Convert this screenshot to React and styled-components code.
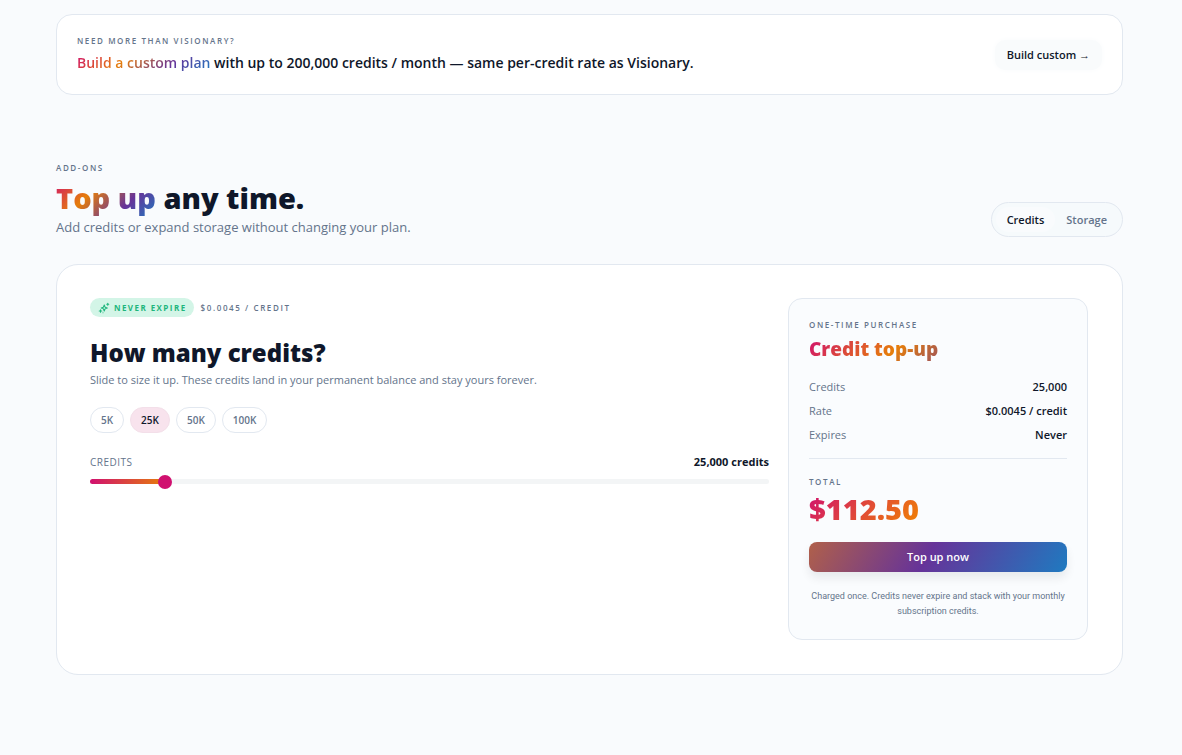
import React, { useState } from 'react'
import styled, { createGlobalStyle, css } from 'styled-components'

const RATE = 0.0045
const MIN = 5000
const MAX = 200000
const PRESETS = [5000, 25000, 50000, 100000]

const brand = 'linear-gradient(135deg, #d0106f 0%, #e67e0a 35%, #663399 70%, #1f7ac0 100%)'
const warm = 'linear-gradient(135deg, #d0106f 0%, #ee7a0a 45%, #e67e0a 100%)'

const GlobalStyle = createGlobalStyle`
  * {
    box-sizing: border-box;
  }

  body {
    margin: 0;
    background: #f9fbfd;
    color: #0f172a;
    font-family: 'Segoe UI', 'Open Sans', 'Noto Sans', sans-serif;
    font-size: 11px;
  }

  h2, h3, p, dl, dd {
    margin: 0;
  }

  button, input {
    font-family: inherit;
  }
`

const Page = styled.main`
  padding: 14px 59px 80px 56px;
`

const Eyebrow = styled.p`
  color: #64748b;
  font-size: 8px;
  font-weight: 600;
  line-height: 12px;
  letter-spacing: 0.2em;
  text-transform: uppercase;
`

const gradientText = css`
  background: ${p => (p.$warm ? warm : brand)};
  background-clip: text;
  -webkit-background-clip: text;
  color: transparent;
`

const GradientSpan = styled.span`
  ${gradientText}
`

const Banner = styled.section`
  display: flex;
  align-items: center;
  justify-content: space-between;
  gap: 20px;
  padding: 20px;
  background: #fff;
  border: 1px solid #e2e8f0;
  border-radius: 16px;
`

const BannerText = styled.p`
  margin-top: 4px;
  font-size: 14px;
  font-weight: 600;
  line-height: 23px;
`

const GhostButton = styled.button`
  flex-shrink: 0;
  padding: 0 12px;
  background: #f9fbfc;
  border: 0;
  border-radius: 10px;
  box-shadow: 0 0 6px #f9fbfc;
  color: #0f172a;
  font-size: 11px;
  font-weight: 600;
  line-height: 30px;
  cursor: pointer;
`

const SectionHead = styled.header`
  display: flex;
  align-items: flex-end;
  justify-content: space-between;
  margin: 67px 0 27px;
`

const Title = styled.h2`
  margin-top: 7px;
  font-size: 29px;
  font-weight: 800;
  line-height: 34px;
`

const Lead = styled.p`
  margin-top: 3px;
  color: #64748b;
  font-size: 13px;
  line-height: 19px;
`

const Tabs = styled.div`
  display: flex;
  padding: 4px;
  background: #f6fafc;
  border: 1px solid #e2e8f0;
  border-radius: 18px;
`

const Tab = styled.button`
  padding: 0 11px;
  background: ${p => (p.$active ? '#f9fbfd' : 'transparent')};
  border: 0;
  border-radius: 13px;
  color: ${p => (p.$active ? '#0f172a' : '#64748b')};
  font-size: 11px;
  font-weight: 600;
  line-height: 25px;
  cursor: pointer;
`

const Card = styled.section`
  display: grid;
  grid-template-columns: 1fr 300px;
  gap: 19px;
  padding: 33px 34px 34px 33px;
  background: #fff;
  border: 1px solid #e2e8f0;
  border-radius: 22px;
`

const BadgeRow = styled.div`
  display: flex;
  align-items: center;
  gap: 7px;
`

const Badge = styled.span`
  display: flex;
  align-items: center;
  gap: 4px;
  padding: 0 7px 0 8px;
  background: #d3f5e7;
  border-radius: 10px;
  color: #1fb67d;
  font-size: 8px;
  font-weight: 700;
  line-height: 19px;
  letter-spacing: 0.18em;
  text-transform: uppercase;
`

const Question = styled.h3`
  margin-top: 20px;
  font-size: 24px;
  font-weight: 800;
  line-height: 32px;
`

const Hint = styled.p`
  margin-top: 2px;
  color: #64748b;
  line-height: 18px;
`

const Presets = styled.div`
  display: flex;
  gap: 6px;
  margin-top: 18px;
`

const Preset = styled.button`
  padding: 0 10px;
  background: ${p => (p.$active ? '#f8e3ed' : '#fff')};
  border: 1px solid ${p => (p.$active ? '#f3dfe9' : '#e2e8f0')};
  border-radius: 13px;
  color: ${p => (p.$active ? '#0f172a' : '#64748b')};
  font-size: 10px;
  font-weight: 600;
  line-height: 24px;
  cursor: pointer;
`

const SliderHead = styled.div`
  display: flex;
  align-items: center;
  justify-content: space-between;
  margin-top: 19px;
  line-height: 20px;
`

const SliderLabel = styled.label`
  color: #64748b;
  font-size: 10px;
  letter-spacing: 0.05em;
  text-transform: uppercase;
`

const SliderValue = styled.output`
  font-weight: 700;
`

const Slider = styled.input`
  display: block;
  width: 100%;
  height: 14px;
  margin: 2px 0 0;
  background: transparent;
  appearance: none;
  cursor: pointer;

  &::-webkit-slider-runnable-track {
    height: 5px;
    background:
      linear-gradient(90deg, #d0106f, #e67e0a) left / var(--fill) 100% no-repeat,
      #f3f5f6;
    border-radius: 3px;
  }

  &::-webkit-slider-thumb {
    width: 14px;
    height: 14px;
    margin-top: -4px;
    background: #d0106f;
    border-radius: 50%;
    appearance: none;
  }
`

const Summary = styled.aside`
  padding: 20px;
  background: #fafcfe;
  border: 1px solid #e2e8f0;
  border-radius: 14px;
`

const SummaryTitle = styled.h3`
  ${gradientText}
  margin-top: 5px;
  font-size: 19px;
  font-weight: 800;
  line-height: 26px;
`

const Lines = styled.dl`
  margin-top: 13px;
  padding-bottom: 11px;
  border-bottom: 1px solid #e2e8f0;
`

const Line = styled.div`
  display: flex;
  justify-content: space-between;
  line-height: 24px;

  > dt {
    color: #64748b;
  }

  > dd {
    font-weight: 600;
  }
`

const TotalLabel = styled(Eyebrow)`
  margin-top: 17px;
`

const Total = styled.p`
  ${gradientText}
  margin-top: 3px;
  font-size: 29px;
  font-weight: 800;
  line-height: 36px;
`

const PayButton = styled.button`
  width: 100%;
  margin-top: 15px;
  padding: 0;
  background: linear-gradient(120deg, #b0604a 0%, #663399 46%, #1f7ac0 100%);
  border: 0;
  border-radius: 8px;
  box-shadow: 0 6px 10px rgba(15, 23, 42, 0.08);
  color: #fff;
  font-size: 11px;
  font-weight: 600;
  line-height: 30px;
  cursor: pointer;
`

const Fine = styled.p`
  margin-top: 17px;
  color: #64748b;
  font-family: 'Segoe UI', Roboto, sans-serif;
  font-size: 9px;
  line-height: 15px;
  text-align: center;
`

const SparkleIcon = () => (
  <svg width="12" height="12" viewBox="0 0 24 24" fill="none" stroke="currentColor" strokeWidth="2.2" strokeLinecap="round" strokeLinejoin="round" aria-hidden="true">
    <path d="M12.500 6l1.700 4.300 4.300 1.700-4.300 1.700-1.700 4.300-1.700-4.300L6.500 12l4.300-1.700z" />
    <path d="M19.500 2.500v4M21.500 4.500h-4M5 15.500v5M7.500 18h-5M10 21.500v.1" />
  </svg>
)

const App = () => {
  const [tab, setTab] = useState('Credits')
  const [credits, setCredits] = useState(25000)

  const amount = credits.toLocaleString('en-US')
  const ratio = (credits - MIN) / (MAX - MIN)
  const fill = `calc(7px + (100% - 14px) * ${ratio})`

  return (
    <>
      <GlobalStyle />
      <Page>
        <Banner>
          <div>
            <Eyebrow>Need more than Visionary?</Eyebrow>
            <BannerText>
              <GradientSpan>Build a custom plan</GradientSpan> with up to 200,000 credits / month — same per-credit rate as Visionary.
            </BannerText>
          </div>
          <GhostButton type="button">Build custom →</GhostButton>
        </Banner>

        <SectionHead>
          <div>
            <Eyebrow>Add-ons</Eyebrow>
            <Title><GradientSpan>Top up</GradientSpan> any time.</Title>
            <Lead>Add credits or expand storage without changing your plan.</Lead>
          </div>
          <Tabs>
            {['Credits', 'Storage'].map(name => (
              <Tab key={name} type="button" $active={tab === name} aria-pressed={tab === name} onClick={() => setTab(name)}>
                {name}
              </Tab>
            ))}
          </Tabs>
        </SectionHead>

        <Card>
          <div>
            <BadgeRow>
              <Badge><SparkleIcon />Never expire</Badge>
              <Eyebrow>$0.0045 / credit</Eyebrow>
            </BadgeRow>
            <Question>How many credits?</Question>
            <Hint>Slide to size it up. These credits land in your permanent balance and stay yours forever.</Hint>
            <Presets>
              {PRESETS.map(n => (
                <Preset key={n} type="button" $active={credits === n} onClick={() => setCredits(n)}>
                  {n / 1000}K
                </Preset>
              ))}
            </Presets>
            <SliderHead>
              <SliderLabel htmlFor="credits">Credits</SliderLabel>
              <SliderValue htmlFor="credits">{amount} credits</SliderValue>
            </SliderHead>
            <Slider
              id="credits"
              type="range"
              min={MIN}
              max={MAX}
              step={1000}
              value={credits}
              onChange={e => setCredits(Number(e.target.value))}
              style={{ '--fill': fill }}
            />
          </div>

          <Summary>
            <Eyebrow>One-time purchase</Eyebrow>
            <SummaryTitle>Credit top-up</SummaryTitle>
            <Lines>
              <Line><dt>Credits</dt><dd>{amount}</dd></Line>
              <Line><dt>Rate</dt><dd>$0.0045 / credit</dd></Line>
              <Line><dt>Expires</dt><dd>Never</dd></Line>
            </Lines>
            <TotalLabel>Total</TotalLabel>
            <Total $warm>${(credits * RATE).toFixed(2)}</Total>
            <PayButton type="button">Top up now</PayButton>
            <Fine>Charged once. Credits never expire and stack with your monthly subscription credits.</Fine>
          </Summary>
        </Card>
      </Page>
    </>
  )
}

export default App
